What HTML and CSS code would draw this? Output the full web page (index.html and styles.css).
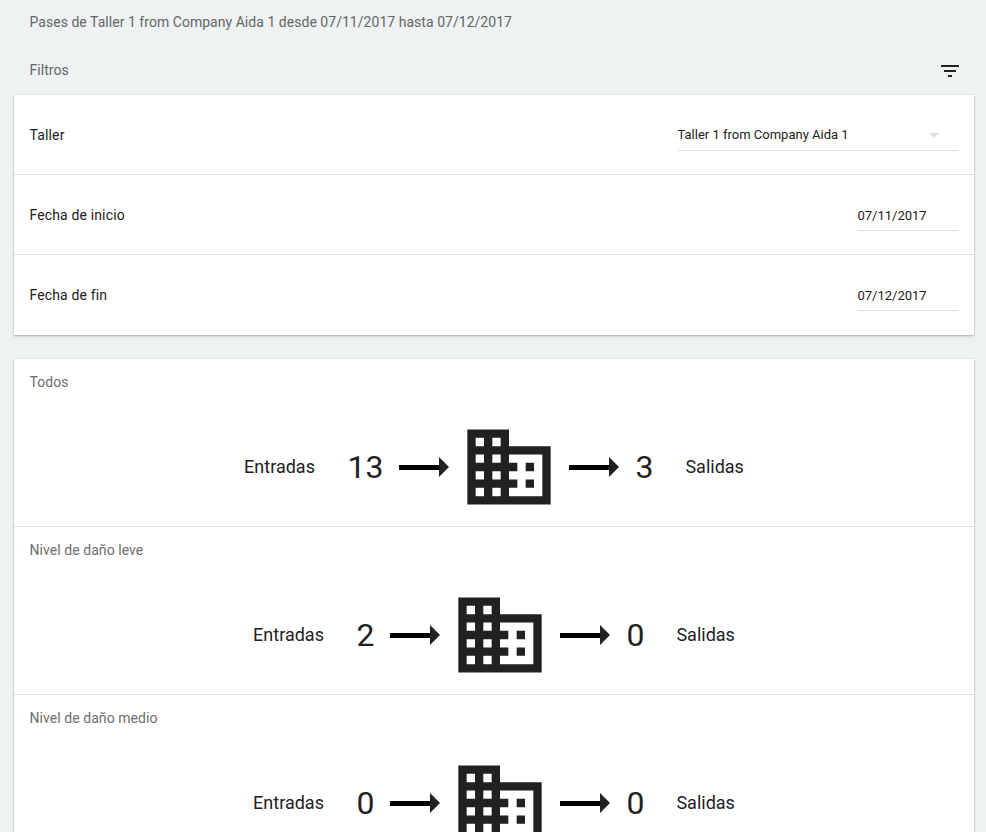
FILE: index.html
```html
<!DOCTYPE html>
<html lang="es">
<head>
<meta charset="utf-8">
<title>Pases</title>
<link rel="stylesheet" href="styles.css">
</head>
<body>
<svg class="defs" width="0" height="0" aria-hidden="true">
  <symbol id="business" viewBox="0 0 24 24"><path d="M12 7V3H2v18h20V7H12zM6 19H4v-2h2v2zm0-4H4v-2h2v2zm0-4H4V9h2v2zm0-4H4V5h2v2zm4 12H8v-2h2v2zm0-4H8v-2h2v2zm0-4H8V9h2v2zm0-4H8V5h2v2zm10 12h-8v-2h2v-2h-2v-2h2v-2h-2V9h8v10zm-2-8h-2v2h2v-2zm0 4h-2v2h2v-2z"/></symbol>
  <symbol id="arrow" viewBox="0 0 50 20"><path fill="#000" d="M0 8h40v5H0z"/><path fill="#212121" d="M40 0l10 10-10 10z"/></symbol>
</svg>
<header class="title">Pases de Taller 1 from Company Aida 1 desde 07/11/2017 hasta 07/12/2017</header>
<div class="filters-head"><span>Filtros</span>
  <svg class="filter-icon" viewBox="0 0 24 24"><path d="M10 18h4v-2h-4v2zM3 6v2h18V6H3zm3 7h12v-2H6v2z"/></svg>
</div>
<section class="card filters">
  <div class="row"><label>Taller</label><div class="field select"><span>Taller 1 from Company Aida 1</span><i class="caret"></i></div></div>
  <div class="row"><label>Fecha de inicio</label><div class="field date">07/11/2017</div></div>
  <div class="row"><label>Fecha de fin</label><div class="field date">07/12/2017</div></div>
</section>
<main class="card">
  <section class="level"><h2>Todos</h2>
    <div class="flow"><span class="label">Entradas</span><span class="count in">13</span><svg class="arrow"><use href="#arrow"/></svg><svg class="building"><use href="#business"/></svg><svg class="arrow"><use href="#arrow"/></svg><span class="count out">3</span><span class="label">Salidas</span></div>
  </section>
  <section class="level"><h2>Nivel de daño leve</h2>
    <div class="flow"><span class="label">Entradas</span><span class="count in">2</span><svg class="arrow"><use href="#arrow"/></svg><svg class="building"><use href="#business"/></svg><svg class="arrow"><use href="#arrow"/></svg><span class="count out">0</span><span class="label">Salidas</span></div>
  </section>
  <section class="level"><h2>Nivel de daño medio</h2>
    <div class="flow"><span class="label">Entradas</span><span class="count in">0</span><svg class="arrow"><use href="#arrow"/></svg><svg class="building"><use href="#business"/></svg><svg class="arrow"><use href="#arrow"/></svg><span class="count out">0</span><span class="label">Salidas</span></div>
  </section>
</main>
</body>
</html>
```
FILE: styles.css
```css
* { box-sizing: border-box; }
html { height: 832px; overflow: hidden; }
body {
  height: 832px;
  margin: 0;
  padding: 0 12px 0 14px;
  overflow: hidden;
  background: #eef2f3;
  color: #212121;
  font: 14px/20px Roboto, sans-serif;
}
.defs { position: absolute; }
.title, .filters-head { padding: 0 16px 0 15.5px; color: #646666; letter-spacing: .035px; }
.title { height: 47px; padding-top: 12px; }
.filters-head { display: flex; justify-content: space-between; align-items: flex-start; height: 48px; padding-top: 13px; padding-right: 12px; }
.filter-icon { width: 24px; height: 24px; margin-top: -1px; fill: #212121; }
.card { background: #fff; box-shadow: 0 1px 3px rgba(0,0,0,.2), 0 1px 1px rgba(0,0,0,.1), 0 0 1px rgba(0,0,0,.1); }
.filters { height: 240px; margin-bottom: 24px; }
.row { display: flex; justify-content: space-between; height: 80px; padding: 30px 16px 0 15.5px; border-bottom: 1px solid #e0e0e0; letter-spacing: .14px; }
.row:last-child { border-bottom: 0; }
.field { height: 26px; border-bottom: 1px solid #e0e0e0; font-size: 13px; letter-spacing: 0; text-indent: -.5px; }
.select { display: flex; justify-content: space-between; width: 280px; padding-right: 19px; }
.caret { margin-top: 8px; width: 10px; height: 5px; background: #dedede; clip-path: polygon(0 0, 100% 0, 50% 100%); }
.date { width: 100px; padding-top: 1px; }
.level { height: 168px; border-bottom: 1px solid #e0e0e0; }
h2 { margin: 0; padding: 13px 16px 0 15.5px; color: #6e6e6e; font: 400 14px/20px Roboto, sans-serif; letter-spacing: .06px; }
.flow { display: flex; justify-content: center; align-items: center; height: 100px; margin-top: 25px; }
.label { font-size: 18px; }
.count { font-size: 32px; line-height: 40px; }
.in { margin: 0 16px 0 32.5px; }
.out { margin: 0 32px 0 16px; }
.building { width: 100px; height: 100px; margin: 0 10px; fill: #212121; }
.arrow { width: 50px; height: 20px; }
```
